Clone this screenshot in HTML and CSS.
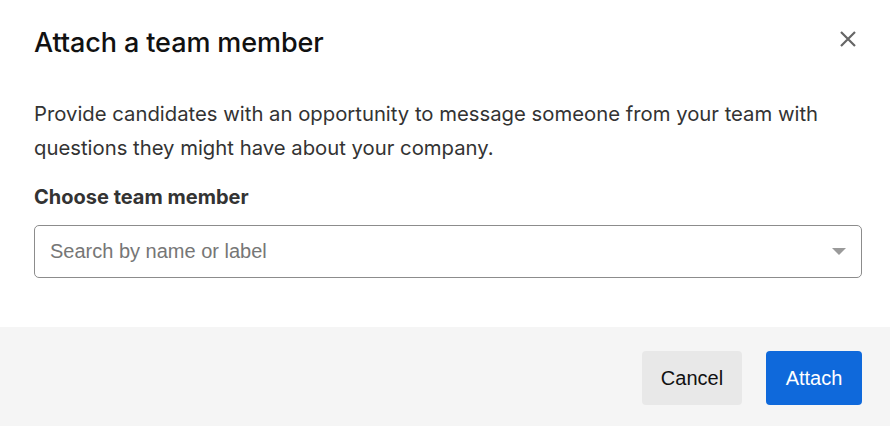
FILE: index.html
```html
<!DOCTYPE html>
<html>
<head>
<meta charset="utf-8">
<link rel="stylesheet" href="styles.css">
</head>
<body>
<div class="dialog">
  <div class="body">
    <div class="header">
      <h1 class="title">Attach a team member</h1>
      <button class="close" aria-label="Close">
        <svg width="16" height="16" viewBox="0 0 16 16"><path d="M1 1 L15 15 M15 1 L1 15" stroke="#666" stroke-width="2.2" stroke-linecap="butt"/></svg>
      </button>
    </div>
    <p class="desc">Provide candidates with an opportunity to message someone from your team with questions they might have about your company.</p>
    <label class="label">Choose team member</label>
    <div class="select">
      <span class="placeholder">Search by name or label</span>
      <svg class="caret" width="14" height="7" viewBox="0 0 14 7"><path d="M0 0 H14 L7 7 Z" fill="#9a9a9a"/></svg>
    </div>
  </div>
  <div class="footer">
    <button class="btn cancel">Cancel</button>
    <button class="btn attach">Attach</button>
  </div>
</div>
</body>
</html>
```
FILE: styles.css
```css
html, body {
  margin: 0;
  padding: 0;
  background: #fff;
}
.dialog {
  width: 890px;
  height: 426px;
  display: flex;
  flex-direction: column;
  overflow: hidden;
  font-family: Inter, "Liberation Sans", sans-serif;
}
.body {
  padding: 23px 28px 49px 34px;
  display: flex;
  flex-direction: column;
}
.header {
  display: flex;
  align-items: center;
  justify-content: space-between;
  height: 38px;
}
.title {
  margin: 0;
  font-size: 27px;
  font-weight: 500;
  color: #111;
  letter-spacing: -0.1px;
}
.close {
  border: 0;
  background: none;
  padding: 0;
  width: 24px;
  height: 24px;
  display: flex;
  align-items: center;
  justify-content: center;
  align-self: flex-start;
  margin-top: 4px;
  margin-right: 2px;
}
.desc {
  margin: 36px 0 0;
  font-size: 20.3px;
  line-height: 34px;
  color: #333;
  max-width: 820px;
}
.label {
  margin-top: 20px;
  font-size: 20px;
  font-weight: 700;
  color: #333;
  line-height: 24px;
}
.select {
  margin-top: 16px;
  height: 51px;
  border: 1px solid #8c8c8c;
  border-radius: 5px;
  display: flex;
  align-items: center;
  justify-content: space-between;
  padding: 0 15px 0 15px;
  width: 796px;
}
.placeholder {
  font-family: "Liberation Sans", Arial, sans-serif;
  font-size: 20px;
  color: #767676;
}
.footer {
  flex: 1;
  background: #f5f5f5;
  display: flex;
  justify-content: flex-end;
  align-items: flex-start;
  gap: 24px;
  padding: 24px 28px 0;
}
.btn {
  height: 54px;
  border: 0;
  border-radius: 4px;
  font-family: "Liberation Sans", Arial, sans-serif;
  font-size: 20px;
  padding: 0;
}
.cancel {
  width: 100px;
  background: #e8e8e8;
  color: #111;
}
.attach {
  width: 96px;
  background: #0f69db;
  color: #fff;
}
```
